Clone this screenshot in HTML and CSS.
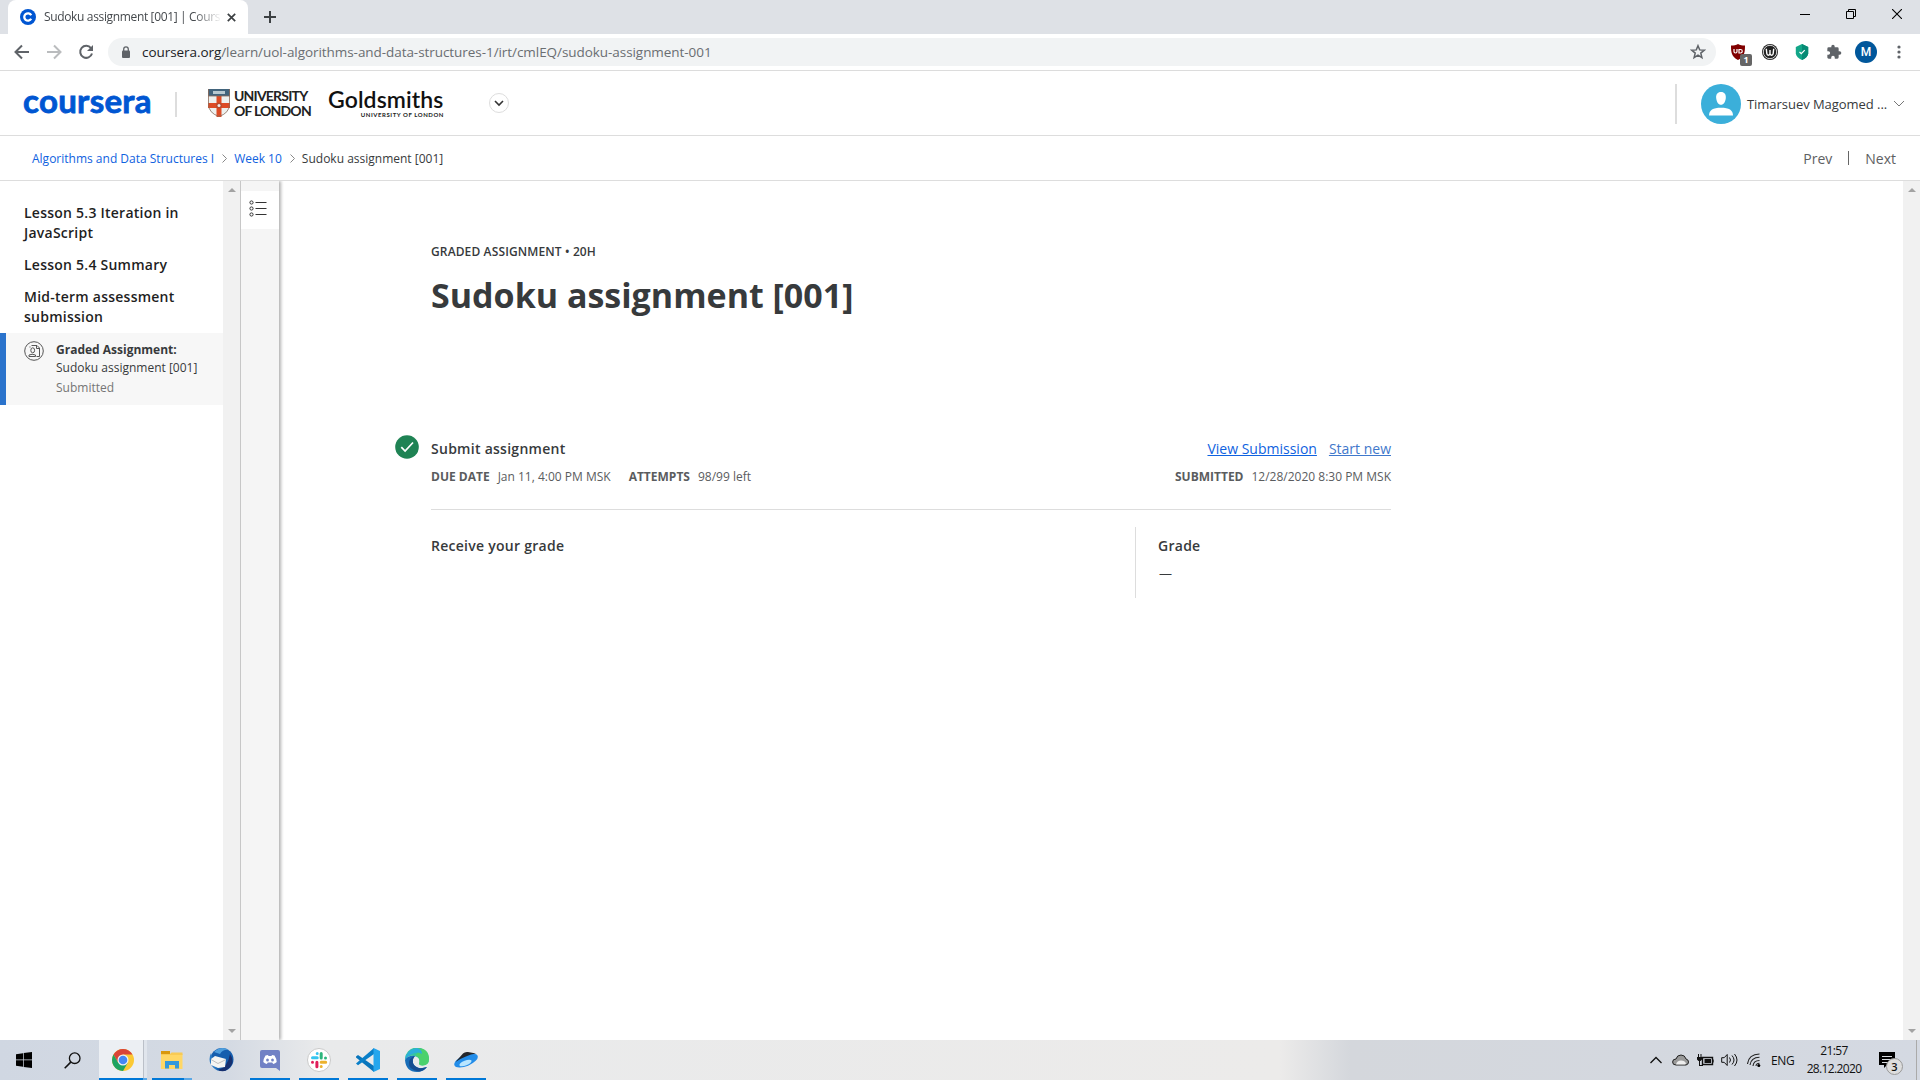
FILE: index.html
```html
<!DOCTYPE html>
<html lang="en">
<head>
<meta charset="utf-8">
<title>Sudoku assignment [001] | Coursera</title>
<link rel="stylesheet" href="styles.css">
</head>
<body>
<div class="screen">
  <header class="tabstrip">
    <div class="tab">
      <svg class="favicon" width="16" height="16" viewBox="0 0 16 16"><circle cx="8" cy="8" r="8" fill="#0056d2"/><path d="M11.2 6.2A3.7 3.7 0 1 0 11.2 9.8" fill="none" stroke="#fff" stroke-width="2.3"/></svg>
      <span class="tab-title">Sudoku assignment [001] | Cours</span>
      <svg class="tab-close" width="9" height="9" viewBox="0 0 9 9"><path d="M.8.8l7.4 7.4M8.2.8L.8 8.2" stroke="#3c4043" stroke-width="1.7"/></svg>
    </div>
    <svg class="new-tab" width="12" height="12" viewBox="0 0 12 12"><path d="M6 0v12M0 6h12" stroke="#3c4043" stroke-width="2"/></svg>
    <div class="window-buttons">
      <svg width="10" height="10" viewBox="0 0 10 10"><path d="M0 5.5h10" stroke="#000"/></svg>
      <svg width="10" height="10" viewBox="0 0 10 10"><path d="M.5 2.5h7v7h-7zM2.5 2.5v-2h7v7h-2" fill="none" stroke="#000"/></svg>
      <svg width="10" height="10" viewBox="0 0 10 10"><path d="M0 0l10 10M10 0L0 10" stroke="#000" stroke-width="1.1"/></svg>
    </div>
  </header>

  <nav class="toolbar">
    <svg class="nav-icon" width="16" height="16" viewBox="0 0 16 16"><path d="M15 8H2M8 1.500L1.500 8L8 14.500" fill="none" stroke="#5f6368" stroke-width="2"/></svg>
    <svg class="nav-icon" width="16" height="16" viewBox="0 0 16 16"><path d="M1 8h13M8 1.500L14.500 8L8 14.500" fill="none" stroke="#babcbe" stroke-width="2"/></svg>
    <svg class="nav-icon" width="16" height="16" viewBox="0 0 16 16"><path d="M13 4.200A6 6 0 1 0 14 9.500" fill="none" stroke="#5f6368" stroke-width="2"/><path d="M15 1v6H9z" fill="#5f6368"/></svg>
    <div class="omnibox">
      <svg width="10" height="13" viewBox="0 0 10 13"><rect x="1" y="4.500" width="8" height="7.500" rx="1" fill="#5f6368"/><path d="M2.700 5V3.200a2.300 2.300 0 0 1 4.600 0V5" fill="none" stroke="#5f6368" stroke-width="1.300"/></svg>
      <span class="url"><b>coursera.org</b>/learn/uol-algorithms-and-data-structures-1/irt/cmlEQ/sudoku-assignment-001</span>
      <svg class="star" width="16" height="16" viewBox="0 0 16 16"><path d="M8 1.700l1.700 4.200 4.600.3-3.500 2.900 1.100 4.500L8 11.200l-3.900 2.400 1.100-4.500-3.500-2.900 4.600-.3z" fill="none" stroke="#5f6368" stroke-width="1.500"/></svg>
    </div>
    <div class="extensions">
      <div class="ublock">
        <svg width="14" height="16" viewBox="0 0 14 16"><path d="M7 0c2 1.200 4 1.500 7 1.500 0 7-.5 11-7 14.500C.5 12.500 0 8.500 0 1.500 3 1.500 5 1.200 7 0z" fill="#800000"/><path d="M3 5v2.500q0 1.500 1.500 1.500T6 7.500V5M8 9.500V5.500h1.500a1.700 1.700 0 0 1 0 3.500H8" fill="none" stroke="#fff" stroke-width="1.200"/></svg>
        <span class="ublock-count">1</span>
      </div>
      <svg width="16" height="16" viewBox="0 0 16 16"><circle cx="8" cy="8" r="8" fill="#222"/><circle cx="8" cy="8" r="6.700" fill="none" stroke="#fff" stroke-width=".8"/><path d="M4.300 4.700l.5 4.800q.2 1.700 1.600 1.700T8 9.500V6v3.500q.2 1.700 1.600 1.700t1.600-1.700l.5-4.800" fill="none" stroke="#fff" stroke-width="1.400"/></svg>
      <svg width="14" height="16" viewBox="0 0 14 16"><path d="M7 0l6.200 3v6.500Q12.500 13.500 7 16 1.500 13.500.8 9.500V3z" fill="#13a688"/><path d="M7 0l6.200 3v6.500Q12.500 13.500 7 16z" fill="#078b75"/><path d="M4.500 8l1.800 1.700L9.700 6.200" fill="none" stroke="#fff" stroke-width="1.200"/></svg>
      <svg width="16" height="16" viewBox="0 0 24 24"><path d="M20.500 11H19V7a2 2 0 0 0-2-2h-4V3.500a2.500 2.500 0 0 0-5 0V5H4a2 2 0 0 0-2 2v3.800h1.500a2.700 2.700 0 0 1 0 5.400H2V20c0 1.100.9 2 2 2h3.800v-1.500a2.700 2.700 0 0 1 5.400 0V22H17a2 2 0 0 0 2-2v-4h1.500a2.500 2.500 0 0 0 0-5z" fill="#5f6368"/></svg>
      <span class="profile">M</span>
      <svg width="4" height="14" viewBox="0 0 4 14"><g fill="#5f6368"><circle cx="2" cy="2" r="1.600"/><circle cx="2" cy="7" r="1.600"/><circle cx="2" cy="12" r="1.600"/></g></svg>
    </div>
  </nav>

  <section class="site-header">
    <span class="coursera">coursera</span>
    <span class="brand-rule"></span>
    <div class="uol">
      <svg width="22" height="28" viewBox="0 0 22 28"><path d="M0 0h22v15q0 9-11 13Q0 24 0 15z" fill="#edf0ee"/><path d="M0 0h22v7H0z" fill="#42647c"/><path d="M5 2h12v3H5z" fill="#b7c8cf"/><path d="M8.500 7h5v21h-5zM0 14h22v5H0z" fill="#dd4b25"/><path d="M0 7h22M.5 0v15q0 9 10.500 12.500Q21.500 24 21.500 15V0" fill="none" stroke="#8b6b5b" stroke-width=".8"/><circle cx="11" cy="16.500" r="3" fill="#b84b2e"/><circle cx="11" cy="16.500" r="1.500" fill="#eee"/></svg>
      <div class="uol-name"><span>UNIVERSITY</span><span>OF LONDON</span></div>
    </div>
    <div class="goldsmiths"><span class="gold-name">Goldsmiths</span><span class="gold-sub">UNIVERSITY OF LONDON</span></div>
    <span class="round-toggle"><svg width="10" height="7" viewBox="0 0 10 7"><path d="M1 1l4 4 4-4" fill="none" stroke="#333" stroke-width="1.600"/></svg></span>
    <div class="account">
      <svg width="40" height="40" viewBox="0 0 40 40"><circle cx="20" cy="20" r="20" fill="#3bafda"/><path d="M20 8c3.500 0 5.200 2.500 4.800 6.200-.4 3.800-2.300 6.500-4.800 6.500s-4.400-2.700-4.800-6.500C14.800 10.500 16.500 8 20 8zM8 31.500c0-5.500 4-7.800 12-7.800s12 2.300 12 7.800z" fill="#fff"/></svg>
      <span class="account-name">Timarsuev Magomed ...</span>
      <svg width="12" height="7" viewBox="0 0 12 7"><path d="M1 1l5 5 5-5" fill="none" stroke="#777"/></svg>
    </div>
  </section>

  <section class="crumbs">
    <a class="crumb-course">Algorithms and Data Structures I</a>
    <svg width="5" height="9" viewBox="0 0 5 9"><path d="M.5.500l4 4-4 4" fill="none" stroke="#888"/></svg>
    <a class="crumb-week">Week 10</a>
    <svg width="5" height="9" viewBox="0 0 5 9"><path d="M.5.500l4 4-4 4" fill="none" stroke="#888"/></svg>
    <span class="crumb-here">Sudoku assignment [001]</span>
    <div class="pager"><span class="prev">Prev</span><i></i><span class="next">Next</span></div>
  </section>

  <div class="body">
    <aside class="sidebar">
      <h3>Lesson 5.3 Iteration in<br>JavaScript</h3>
      <h3>Lesson 5.4 Summary</h3>
      <h3>Mid-term assessment<br>submission</h3>
      <div class="item">
        <svg width="20" height="20" viewBox="0 0 20 20"><g fill="none" stroke="#555"><circle cx="10" cy="10" r="9.300"/><path d="M7.500 4.500H13l2.500 2.500v8.500h-3M12.500 4.500V7.500h3M6 6.500v-1M5 15.500v-1.500q3-1.500 6.500 0v1.500z"/><ellipse cx="8.700" cy="9.300" rx="1.900" ry="2.500"/></g></svg>
        <div class="item-text"><b>Graded Assignment:</b><span class="item-name">Sudoku assignment [001]</span><span class="item-state">Submitted</span></div>
      </div>
    </aside>
    <div class="scrollbar"><i class="up"></i><i class="down"></i></div>
    <div class="rail">
      <div class="rail-button"><svg width="18" height="17" viewBox="0 0 18 17"><g fill="none" stroke="#333"><circle cx="2.500" cy="2.500" r="1.600"/><circle cx="2.500" cy="8.500" r="1.600"/><circle cx="2.500" cy="14.500" r="1.600"/><path d="M6.500 2.500h11M6.500 8.500h11M6.500 14.500h11"/></g></svg></div>
    </div>
    <main class="content">
      <p class="kicker">GRADED ASSIGNMENT • 20H</p>
      <h1>Sudoku assignment [001]</h1>
      <div class="submit">
        <svg class="done" width="24" height="24" viewBox="0 0 24 24"><circle cx="12" cy="12" r="11.800" fill="#1f8354"/><path d="M6.300 12.200l3.800 3.900 7.900-8.600" fill="none" stroke="#fff" stroke-width="1.700"/></svg>
        <div class="submit-left">
          <h2>Submit assignment</h2>
          <p class="meta"><b>DUE DATE</b><span class="due-date">Jan 11, 4:00 PM MSK</span><b>ATTEMPTS</b><span>98/99 left</span></p>
        </div>
        <div class="submit-right">
          <p class="links"><a>View Submission</a><a class="start">Start new</a></p>
          <p class="meta"><b>SUBMITTED</b><span>12/28/2020 8:30 PM MSK</span></p>
        </div>
      </div>
      <div class="grade-row">
        <h2 class="receive">Receive your grade</h2>
        <div class="grade"><h2>Grade</h2><span>—</span></div>
      </div>
    </main>
    <div class="scrollbar"><i class="up"></i><i class="down"></i></div>
  </div>

  <footer class="taskbar">
    <div class="task"><svg width="16" height="16" viewBox="0 0 16 16"><path d="M0 2.200l7-1v6.300H0zM7.700 1.100L16 0v7.500H7.700zM0 8.200h7v6.500l-7-1zM7.700 8.200H16V16l-8.300-1.100z"/></svg></div>
    <div class="task"><svg width="17" height="17" viewBox="0 0 17 17"><circle cx="10.700" cy="6.200" r="5.300" fill="none" stroke="#111" stroke-width="1.300"/><path d="M6.800 10.100L.7 16.200" stroke="#111" stroke-width="1.600"/></svg></div>
    <div class="task chrome"><svg width="24" height="24" viewBox="0 0 24 24"><circle cx="12" cy="12" r="11" fill="#fbc934"/><path d="M2.500 6.500A11 11 0 0 1 21.500 6.500H12L7.200 14.800z" fill="#da4437"/><path d="M2.500 6.500A11 11 0 0 0 12 23l4.800-8.300H7.200z" fill="#1da362"/><circle cx="12" cy="12" r="5.500" fill="#f1f1f1"/><circle cx="12" cy="12" r="4.300" fill="#4587f3"/></svg></div>
    <div class="task open stacked"><svg width="24" height="24" viewBox="0 0 24 24"><path d="M1 3h9v5H1z" fill="#d9980c"/><path d="M1 6h21.500v15H1z" fill="#ffd766"/><path d="M1 6h9l1.500-1.500h11V7H1z" fill="#f8ca55"/><path d="M5 20.500v-7.500h14v7.500h-4v-3.500H9v3.500z" fill="#3398dc"/></svg></div>
    <div class="task mail"><svg width="26" height="26" viewBox="0 0 26 26"><circle cx="14" cy="12.500" r="11.500" fill="#155eae"/><path d="M6 5Q13-2 21 3q-6-1-9 4z" fill="#4e9ddc"/><path d="M3 6q-4 9 3 15l4 3-3-5z" fill="#2a7ac4"/><path d="M22 7q6 9-2 15-4 4-10 1 10-3 12-16z" fill="#17306f"/><path d="M3 12l4-3 11 3-1 8-7 1-7-3z" fill="#f5f5f2"/><path d="M3 12.500l7 4 8-4" fill="none" stroke="#bebebe"/></svg></div>
    <div class="task open"><svg width="24" height="24" viewBox="0 0 24 24"><path d="M4 2h16q2 0 2 2v19l-4-3H4q-2 0-2-2V4q0-2 2-2z" fill="#7181c5"/><path d="M7.500 7.500L10 7l.5 1h3l.5-1 2.500.5q2 3 2.200 6.500-1.500 1.500-3.500 2l-1-1.500h-4.400l-1 1.500q-2-.5-3.500-2Q5.500 10.500 7.500 7.500z" fill="#fff"/><ellipse cx="9.500" cy="12" rx="1.400" ry="1.600" fill="#7181c5"/><ellipse cx="14.500" cy="12" rx="1.400" ry="1.600" fill="#7181c5"/></svg></div>
    <div class="task open"><svg width="24" height="24" viewBox="0 0 24 24"><circle cx="12" cy="12" r="11.500" fill="#fff" stroke="#c9c9c9"/><g stroke-width="3" stroke-linecap="round"><path d="M5.500 9.800h4.700M10.200 5.500v.1" stroke="#36c5f0"/><path d="M14.200 5.500v4.500M18.500 10v.1" stroke="#2eb67d"/><path d="M14.200 14.200h4.500M14.200 18.500v.1" stroke="#ecb22e"/><path d="M9.900 14.200v4.500M5.500 14.200v.1" stroke="#e01e5a"/></g></svg></div>
    <div class="task open"><svg width="24" height="24" viewBox="0 0 24 24"><path d="M0 8.500L2 7l16 11v6L0 9.500z" fill="#0875bc"/><path d="M0 15.500L18 0v6L2 17.200z" fill="#087fc9"/><path d="M17.500 0L24 3v18l-6.500 3V0z" fill="#25a6ed"/></svg></div>
    <div class="task open"><svg width="24" height="24" viewBox="0 0 24 24"><path d="M0 12A12 12 0 0 1 24 11q0 6-6.500 6.500-4.500 0-3-3.500.5-5-5.500-6Q3 7 0 12z" fill="#35c5a0"/><path d="M12 0q12 0 12 11 0 6-6.500 6.500-4.500 0-3-3.500.5-5-4-6.500 5-5 1.500-7.500z" fill="#4bd16c"/><path d="M0 12Q1 2 12 0q5 1 5 6-4-3-10 0Q2 8 0 12z" fill="#2caedb"/><path d="M0 12Q3 7 10 8q-4 4-1 9 4 5 13 2-4 5-10 5Q1 24 0 12z" fill="#176db8"/><path d="M10 8q-4 4-1 9 4 5 13 2-3 4-8 4.500Q3 22 4 14q1-5 6-6z" fill="#164d90"/></svg></div>
    <div class="task open"><svg width="26" height="18" viewBox="0 0 26 18"><ellipse cx="13" cy="9.500" rx="12.500" ry="5.600" transform="rotate(-22 13 9.500)" fill="#238de9"/><path d="M2.500 11L10 2.500Q12 .5 15 1l8 1.500q-10 1.500-20.500 8.500z" fill="#23262b"/><ellipse cx="12.500" cy="12" rx="6.500" ry="2.500" transform="rotate(-22 12.500 12)" fill="#b9e6ff"/></svg></div>
    <div class="tray">
      <svg width="12" height="8" viewBox="0 0 12 8"><path d="M.5 7L6 1.500 11.500 7" fill="none" stroke="#111" stroke-width="1.300"/></svg>
      <svg class="cloud" width="17" height="12" viewBox="0 0 17 12"><path d="M4 11q-3.400 0-3.400-3T4 5q1-4 5-4t5 4q2.500.500 2.500 3T14 11z" fill="#999" stroke="#222"/><path d="M4 10.500q1-4 5-4t5 3l-1 1z" fill="#eee"/></svg>
      <svg class="battery" width="17" height="13" viewBox="0 0 17 13"><path d="M5.500 3.500h10v7h-10zM16 5.500v3" fill="none" stroke="#111" stroke-width="1.400"/><path d="M7.500 5h6.500v4H7.500zM0 3h5v2.500L3.500 7h-2L0 5.500zM1 0h1v3H1zM3.500 0h1v3h-1zM2 6h1v5h3v1H2z" fill="#111"/></svg>
      <svg class="sound" width="17" height="14" viewBox="0 0 17 14"><g fill="none" stroke="#111"><path d="M.7 4.700h2.500l3-3.200v11l-3-3.200H.7zM8.500 4.500q2 2.500 0 5M11 2.500q4 4.500 0 9M13.500 1q5 6 0 12"/></g></svg>
      <svg class="wifi" width="14" height="14" viewBox="0 0 14 14"><g fill="none" stroke="#222" stroke-width="1.100"><path d="M.5 11Q1.500 1.500 12.500 1M3 12Q4 4.500 12.500 4.300M6 13q.5-5.500 6.500-5.500M9 13q0-2.500 3.500-2.700"/></g><circle cx="11.800" cy="12.500" r="1.500"/></svg>
      <span class="lang">ENG</span>
      <div class="clock"><span class="time">21:57</span><span class="date">28.12.2020</span></div>
      <div class="notify"><svg width="16" height="16" viewBox="0 0 16 16"><path d="M0 0h16v13H8l-3 3v-3H0z" fill="#000"/><path d="M3 4.500h10M3 7.500h10M3 10.500h6" stroke="#d7dade"/></svg><span class="notify-count">3</span></div>
      <i class="peek"></i>
    </div>
  </footer>
</div>
</body>
</html>
```

FILE: styles.css
```css
* { box-sizing: border-box; }
body, p, h1, h2, h3 { margin: 0; }
body { width: 1920px; height: 1080px; overflow: hidden; background: #fff; font-family: "Open Sans", sans-serif; color: #373a3c; }
svg { display: block; flex: none; }
span, b, a { white-space: nowrap; }
.screen { display: flex; flex-direction: column; height: 1080px; }

/* browser chrome */
.tabstrip { height: 34px; flex: none; background: #dee1e6; display: flex; align-items: center; padding-left: 8px; }
.tab { width: 240px; height: 34px; background: #fff; border-radius: 8px 8px 0 0; display: flex; align-items: center; padding: 0 12px; }
.tab-title { width: 176px; margin-left: 8px; font-size: 12px; line-height: 18px; letter-spacing: -.35px; color: #45494d; -webkit-mask-image: linear-gradient(90deg, #000 150px, transparent 178px); }
.tab-close { margin-left: 7px; }
.new-tab { margin-left: 16px; }
.window-buttons { margin-left: auto; display: flex; gap: 36px; padding-right: 18px; height: 10px; margin-bottom: 6px; }
.toolbar { height: 37px; flex: none; border-bottom: 1px solid #dcdcdc; display: flex; align-items: center; padding-left: 14px; }
.nav-icon { margin-right: 16px; }
.omnibox { width: 1608px; height: 28px; margin-left: -2px; border-radius: 14px; background: #f1f3f4; display: flex; align-items: center; padding: 0 10px 0 13px; }
.url { margin-left: 11px; font-size: 13.5px; line-height: 20px; letter-spacing: -.06px; color: #6a6e72; }
.url b { color: #202124; font-weight: 400; }
.star { margin-left: auto; }
.extensions { display: flex; align-items: center; margin-left: 15px; }
.extensions > svg { margin-left: 17px; }
.extensions > .profile { width: 22px; height: 22px; border-radius: 50%; background: #01579b; color: #fff; text-align: center; font: 500 12px/22px Roboto, sans-serif; margin-left: 13px; }
.extensions > :last-child { margin-left: 20px; }
.ublock { position: relative; }
.ublock-count { position: absolute; left: 9px; top: 10px; width: 12px; height: 12px; border-radius: 2px; background: #666; color: #fff; font-size: 9px; font-weight: 700; line-height: 12px; text-align: center; }

/* site header */
.site-header { height: 65px; flex: none; border-bottom: 1px solid #ddd; display: flex; align-items: center; padding-left: 23px; }
.coursera { color: #0056d2; font: 700 33px/40px Lato, sans-serif; letter-spacing: .3px; width: 129px; margin-top: -7px; -webkit-text-stroke: .8px #0056d2; }
.brand-rule { width: 2px; height: 25px; background: #ddd; margin: 2px 31px 0 23px; }
.uol { display: flex; gap: 4px; align-items: center; width: 120px; }
.uol-name { display: flex; flex-direction: column; font: 700 14px/15px Lato, sans-serif; letter-spacing: -.8px; color: #222; }
.goldsmiths { display: flex; flex-direction: column; width: 116px; margin-top: 1px; }
.gold-name { font: 600 23px/23px Lato, sans-serif; letter-spacing: .1px; color: #111; }
.gold-sub { align-self: flex-end; font: 700 6px/8px Lato, sans-serif; letter-spacing: .55px; color: #222; }
.round-toggle { width: 20px; height: 20px; margin-left: 45px; border: 1px solid #ddd; border-radius: 50%; display: flex; align-items: center; justify-content: center; }
.account { margin-left: auto; margin-top: 1px; border-left: 2px solid #ddd; height: 40px; display: flex; align-items: center; padding: 0 15px 0 24px; }
.account-name { margin-left: 6px; width: 139px; margin-right: 7px; font-size: 13px; line-height: 20px; letter-spacing: -.04px; }

.crumbs { height: 45px; flex: none; border-bottom: 1px solid #ddd; display: flex; align-items: center; padding: 0 24px 0 32px; gap: 8px; font-size: 12px; }
.crumbs a { color: #0f62e0; }
.crumb-week, .crumb-here { margin-left: -1px; }
.pager { margin-left: auto; display: flex; align-items: center; font-size: 14px; color: #5e6062; }
.pager i { width: 1px; height: 14px; background: #666; margin: 0 16px; }

/* page body */
.body { flex: 1; display: flex; min-height: 0; }
.sidebar { width: 223px; padding-top: 22px; }
.sidebar h3 { padding-left: 24px; margin-bottom: 12px; font-size: 14px; font-weight: 600; line-height: 20px; letter-spacing: .24px; color: #1f1f1f; }
.item { height: 72px; margin-top: -6px; border-left: 6px solid #2a73cc; background: #f7f7f7; display: flex; padding: 8px 0 0 18px; }
.item-text { display: flex; flex-direction: column; margin-left: 12px; font-size: 12px; line-height: 18px; }
.item-state { margin-top: 2px; color: #757575; }
.scrollbar { width: 17px; background: #f1f1f1; display: flex; flex-direction: column; justify-content: space-between; align-items: center; padding: 7px 0; }
.up { border: solid transparent; border-width: 0 4px 4px; border-bottom-color: #a3a3a3; }
.down { border: solid transparent; border-width: 4px 4px 0; border-top-color: #a3a3a3; }
.rail { width: 39px; border-left: 1px solid #c7c7c7; background: #f5f5f5; padding-top: 10px; box-shadow: 2px 0 3px rgba(0,0,0,.3); clip-path: inset(0 -6px 0 0); }
.rail-button { height: 38px; background: #fff; padding: 9px 0 0 8px; }
.content { flex: 1; padding: 61px 0 0 152px; }
.kicker { font-size: 12px; font-weight: 600; line-height: 20px; letter-spacing: .13px; }
h1 { font-size: 34px; font-weight: 700; line-height: 48px; margin-top: 9px; width: max-content; }
.submit { position: relative; margin-top: 118px; width: 960px; height: 73px; display: flex; justify-content: space-between; border-bottom: 1px solid #ddd; }
.done { position: absolute; left: -36px; top: -2px; }
h2 { font-size: 14px; font-weight: 600; line-height: 24px; letter-spacing: .27px; }
.meta { display: flex; font-size: 12px; line-height: 20px; margin-top: 6px; color: #5a5c5e; }
.meta b { margin-right: 8px; }
.due-date { margin-right: 18px; }
.submit-right { display: flex; flex-direction: column; align-items: flex-end; }
.links { display: flex; gap: 12px; font-size: 14px; line-height: 24px; color: #0f62e0; }
.links a { text-decoration: underline; }
.links .start { color: #3f78cb; }
.grade-row { width: 960px; margin-top: 17px; display: flex; justify-content: space-between; }
.receive { margin-top: 7px; }
.grade { width: 256px; height: 71px; border-left: 1px solid #ddd; padding: 7px 0 0 22px; }
.grade span { display: block; margin: 3px 0 0 1px; font-size: 13px; line-height: 24px; }

/* taskbar */
.taskbar { height: 40px; flex: none; display: flex; background: linear-gradient(90deg, #d0d7e2 0, #d4dae3 230px, #e9eaeb 320px, #ecebea 1280px, #d4d7dc 1350px, #d4d9e2 100%); }
.task { width: 48px; display: flex; align-items: center; justify-content: center; }
.task.chrome { margin-left: 3px; background: linear-gradient(#0078d7, #0078d7) 0 100% / 44px 2px no-repeat, linear-gradient(#5ba8e6, #5ba8e6) 44px 100% / 4px 2px no-repeat, linear-gradient(90deg, #eceff3 44px, #bbc0c8 44px 45px, #e0e5ec 45px); }
.task.mail { width: 40px; margin-left: 9px; }
.task.open { width: 40px; margin-left: 9px; box-shadow: inset 0 -2px #0078d7; }
.task.stacked { margin-left: 5px; box-shadow: none; background: linear-gradient(90deg, #0078d7 32px, #5ba8e6 32px) 0 100% / 40px 2px no-repeat; }
.tray { margin-left: auto; display: flex; align-items: center; color: #111; font-size: 12px; }
.cloud { margin-left: 10px; }
.battery { margin-left: 8px; }
.sound { margin-left: 7px; }
.wifi { margin-left: 9px; }
.lang { width: 23px; margin: 0 13px 0 10px; letter-spacing: -.4px; }
.clock { display: flex; flex-direction: column; align-items: center; line-height: 18px; width: 54px; letter-spacing: -.65px; }
.time { letter-spacing: -.6px; }
.notify { position: relative; margin-left: 18px; width: 37px; }
.notify-count { position: absolute; left: 7px; top: 6px; width: 17px; height: 17px; border-radius: 50%; background: #ddd; border: 1px solid #999; text-align: center; font-size: 11px; font-weight: 600; line-height: 15px; }
.peek { height: 40px; width: 4px; border-left: 1px solid #aaa; }
```
